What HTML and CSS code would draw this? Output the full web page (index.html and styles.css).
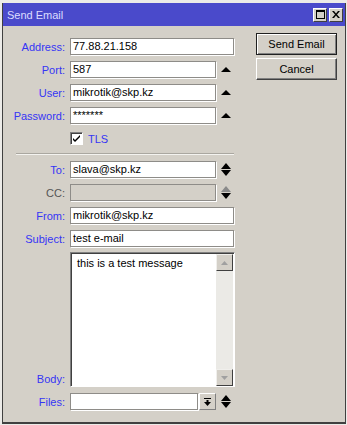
FILE: index.html
```html
<!DOCTYPE html>
<html lang="en">
<head>
    <meta charset="UTF-8">
    <meta name="viewport" content="width=device-width, initial-scale=1.0">
    <title>Send Email</title>
    <link rel="stylesheet" href="styles.css">
</head>
<body>

    <div class="window">
        <div class="titlebar">
            <span class="title">Send Email</span>
            <div class="tb-buttons">
                <span class="tb-btn">
                    <svg width="9" height="9" viewBox="0 0 9 9"><rect x="0.5" y="0.5" width="8" height="8" fill="none" stroke="#000"/><rect x="0" y="0" width="9" height="2" fill="#000"/></svg>
                </span>
                <span class="tb-btn">
                    <svg width="8" height="7" viewBox="0 0 8 7"><path d="M0 0h2l2 2.5 2-2.5h2l-3 3.5 3 3.5h-2l-2-2.5-2 2.5h-2l3-3.5z" fill="#000"/></svg>
                </span>
            </div>
        </div>

        <div class="content">
            <div class="form">
                <div class="row">
                    <span class="label">Address:</span>
                    <div class="input wide">77.88.21.158</div>
                </div>
                <div class="row">
                    <span class="label">Port:</span>
                    <div class="input">587</div>
                    <span class="arrows"><svg width="10" height="5" viewBox="0 0 10 5"><path d="M0 5L5 0L10 5z" fill="#000"/></svg></span>
                </div>
                <div class="row">
                    <span class="label">User:</span>
                    <div class="input">mikrotik@skp.kz</div>
                    <span class="arrows"><svg width="10" height="5" viewBox="0 0 10 5"><path d="M0 5L5 0L10 5z" fill="#000"/></svg></span>
                </div>
                <div class="row">
                    <span class="label">Password:</span>
                    <div class="input">*******</div>
                    <span class="arrows"><svg width="10" height="5" viewBox="0 0 10 5"><path d="M0 5L5 0L10 5z" fill="#000"/></svg></span>
                </div>
                <div class="row">
                    <span class="label"></span>
                    <span class="checkbox">
                        <svg width="9" height="9" viewBox="0 0 9 9"><path d="M1 4l2 2 5-5v2l-5 5-2-2z" fill="#000"/></svg>
                    </span>
                    <span class="check-label">TLS</span>
                </div>

                <div class="separator"></div>

                <div class="row">
                    <span class="label">To:</span>
                    <div class="input">slava@skp.kz</div>
                    <span class="arrows"><svg width="10" height="13" viewBox="0 0 10 13"><path d="M0 6L5 0L10 6z" fill="#000"/><path d="M0 7L5 13L10 7z" fill="#000"/></svg></span>
                </div>
                <div class="row">
                    <span class="label gray">CC:</span>
                    <div class="input disabled"></div>
                    <span class="arrows"><svg width="10" height="13" viewBox="0 0 10 13"><path d="M0 6L5 0L10 6z" fill="#8a8a8a"/><path d="M0 7L5 13L10 7z" fill="#000"/></svg></span>
                </div>
                <div class="row">
                    <span class="label">From:</span>
                    <div class="input wide">mikrotik@skp.kz</div>
                </div>
                <div class="row subject">
                    <span class="label">Subject:</span>
                    <div class="input wide">test e-mail</div>
                </div>
                <div class="row body-row">
                    <span class="label">Body:</span>
                    <div class="textarea">
                        <div class="text">this is a test message</div>
                        <div class="scrollbar">
                            <span class="sb-btn"><svg width="7" height="4" viewBox="0 0 7 4"><path d="M0 4L3.5 0L7 4z" fill="#a0a0a0"/></svg></span>
                            <span class="sb-btn"><svg width="7" height="4" viewBox="0 0 7 4"><path d="M0 0L3.5 4L7 0z" fill="#a0a0a0"/></svg></span>
                        </div>
                    </div>
                </div>
                <div class="row">
                    <span class="label">Files:</span>
                    <div class="input files"></div>
                    <span class="drop-btn"><svg width="7" height="8" viewBox="0 0 7 8"><rect x="0" y="0" width="7" height="1" fill="#000"/><rect x="2.5" y="2" width="2" height="2" fill="#000"/><path d="M0 4L3.5 8L7 4z" fill="#000"/></svg></span>
                    <span class="arrows"><svg width="10" height="13" viewBox="0 0 10 13"><path d="M0 6L5 0L10 6z" fill="#000"/><path d="M0 7L5 13L10 7z" fill="#000"/></svg></span>
                </div>
            </div>

            <div class="actions">
                <button class="btn default">Send Email</button>
                <button class="btn">Cancel</button>
            </div>
        </div>
    </div>

</body>
</html>
```

FILE: styles.css
```css
* {
    margin: 0;
    padding: 0;
    box-sizing: border-box;
    font-family: "Liberation Sans", Arial, sans-serif;
}

body {
    background-color: #ecebe8;
    width: 347px;
    height: 425px;
    overflow: hidden;
}

.window {
    margin: 3px 1px 0 2px;
    height: 421px;
    background: #d4d0c8;
    border-left: 1px solid #404040;
    border-right: 1px solid #404040;
    border-bottom: 2px solid #404040;
}

.titlebar {
    height: 23px;
    background: #4a4acb;
    display: flex;
    align-items: center;
    justify-content: space-between;
    padding: 0 2px 0 4px;
}

.title {
    color: #dcdcff;
    font-size: 11px;
}

.tb-buttons {
    display: flex;
    gap: 2px;
}

.tb-btn {
    width: 14px;
    height: 14px;
    background: #d4d0c8;
    border: 1px solid;
    border-color: #fff #404040 #404040 #fff;
    display: flex;
    align-items: center;
    justify-content: center;
}

.content {
    display: flex;
}

.form {
    width: 233px;
    padding-top: 12px;
}

.row {
    display: flex;
    align-items: center;
    height: 17px;
    margin-bottom: 6px;
}

.label {
    width: 62px;
    margin-right: 5px;
    text-align: right;
    color: #3535f5;
    font-size: 11px;
    flex-shrink: 0;
}

.label.gray {
    color: #555;
}

.input {
    width: 147px;
    height: 17px;
    background: white;
    border: 1px solid #8e8c88;
    box-shadow: 1px 1px 0 #fff;
    font-size: 11px;
    line-height: 15px;
    padding-left: 2px;
    white-space: nowrap;
    overflow: hidden;
}

.input.wide {
    width: 164px;
}

.input.disabled {
    background: #d4d0c8;
}

.input.files {
    width: 129px;
}

.arrows {
    width: 20px;
    height: 17px;
    display: flex;
    align-items: center;
    justify-content: center;
}

.checkbox {
    width: 13px;
    height: 13px;
    background: white;
    border: 1px solid;
    border-color: #808080 #fff #fff #808080;
    box-shadow: inset 1px 1px 0 #404040;
    display: flex;
    align-items: center;
    justify-content: center;
}

.check-label {
    margin-left: 5px;
    color: #3535f5;
    font-size: 11px;
}

.separator {
    margin: 0 0 6px 13px;
    width: 218px;
    border-top: 1px solid #aaa7a0;
    border-bottom: 1px solid #f4f3f0;
}

.row.subject {
    margin-bottom: 5px;
}

.row.body-row {
    height: 135px;
    align-items: flex-end;
}

.row.body-row .label {
    padding-bottom: 2px;
}

.textarea {
    width: 165px;
    height: 135px;
    display: flex;
    background: white;
    border: 1px solid;
    border-color: #808080 #fff #fff #808080;
    box-shadow: inset 1px 1px 0 #404040;
}

.text {
    flex: 1;
    font-size: 11px;
    padding: 4px 0 0 6px;
}

.scrollbar {
    width: 17px;
    background: #ebeae6;
    display: flex;
    flex-direction: column;
    justify-content: space-between;
    margin: 1px 1px 0 0;
}

.sb-btn {
    width: 17px;
    height: 17px;
    background: #d4d0c8;
    border: 1px solid;
    border-color: #f0efec #404040 #404040 #f0efec;
    display: flex;
    align-items: center;
    justify-content: center;
}

.drop-btn {
    width: 17px;
    height: 17px;
    margin-left: 1px;
    background: #d4d0c8;
    border: 1px solid;
    border-color: #fff #808080 #808080 #fff;
    display: flex;
    align-items: center;
    justify-content: center;
}

.actions {
    display: flex;
    flex-direction: column;
    gap: 3px;
    padding: 7px 0 0 20px;
}

.btn {
    width: 81px;
    height: 22px;
    background: #d4d0c8;
    border: 1px solid;
    border-color: #fff #404040 #404040 #fff;
    box-shadow: inset -1px -1px 0 #808080;
    font-size: 11px;
    color: #000;
}

.btn.default {
    border: 1px solid #202020;
    box-shadow: inset 1px 1px 0 #fff, inset -1px -1px 0 #808080;
}
```
